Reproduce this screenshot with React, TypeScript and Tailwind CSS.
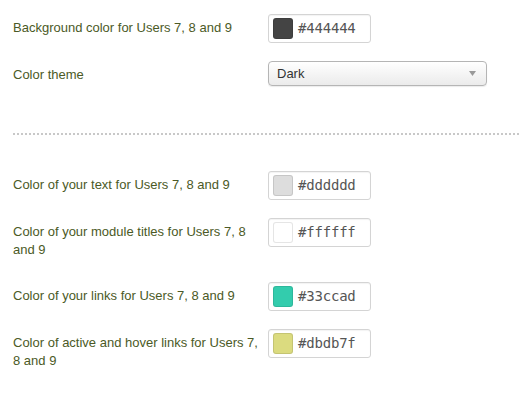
import React from 'react'

interface ColorRow {
  label: string;
  value: string;
  wide?: boolean;
}

const firstRows: ColorRow[] = [
  { label: 'Background color for Users 7, 8 and 9', value: '#444444' },
]

const secondRows: ColorRow[] = [
  { label: 'Color of your text for Users 7, 8 and 9', value: '#dddddd' },
  { label: 'Color of your module titles for Users 7, 8 and 9', value: '#ffffff', wide: true },
  { label: 'Color of your links for Users 7, 8 and 9', value: '#33ccad' },
  { label: 'Color of active and hover links for Users 7, 8 and 9', value: '#dbdb7f', wide: true },
]

const ColorField: React.FC<ColorRow> = ({ label, value, wide }) => (
  <div className={`flex items-start ${wide ? 'mb-[23px]' : 'mb-[18px]'}`}>
    <label className="w-[255px] pt-[5px] leading-[18px] text-[13px] text-[#4b5a26]">{label}</label>
    <div className="flex items-center h-[29px] w-[103px] border border-[#d4d4d4] rounded-[3px] bg-white shadow-[inset_0_1px_1px_rgba(0,0,0,0.05)] pl-[4px]">
      <span
        className="w-[20px] h-[21px] rounded-[3px] border border-black/10 shrink-0"
        style={{ backgroundColor: value }}
      />
      <span className="ml-[5px] text-[14px] text-[#555] font-['DejaVu_Sans_Mono',monospace] tracking-[-0.2px]">{value}</span>
    </div>
  </div>
)

export default function App() {
  return (
    <div className="bg-white w-[519px] h-[407px] pl-[13px] pt-[14px] font-['Liberation_Sans',Arial,sans-serif] overflow-hidden">
      {firstRows.map((r) => (
        <ColorField key={r.value} {...r} />
      ))}
      <div className="flex items-start">
        <label className="w-[255px] pt-[5px] leading-[18px] text-[13px] text-[#4b5a26]">Color theme</label>
        <div className="flex items-center justify-between h-[25px] w-[219px] border border-[#b5b5b5] rounded-[4px] bg-gradient-to-b from-white to-[#ebebeb] shadow-[0_1px_1px_rgba(0,0,0,0.08)] pl-[8px] pr-[10px]">
          <span className="text-[13px] text-[#333]">Dark</span>
          <svg width="7" height="5" viewBox="0 0 7 5">
            <path d="M0 0 L7 0 L3.5 5 Z" fill="#999" />
          </svg>
        </div>
      </div>
      <div className="mt-[47px] mb-[36px] border-t-2 border-dotted border-[#c8c8c8]" />
      {secondRows.map((r) => (
        <ColorField key={r.value} {...r} />
      ))}
    </div>
  )
}
